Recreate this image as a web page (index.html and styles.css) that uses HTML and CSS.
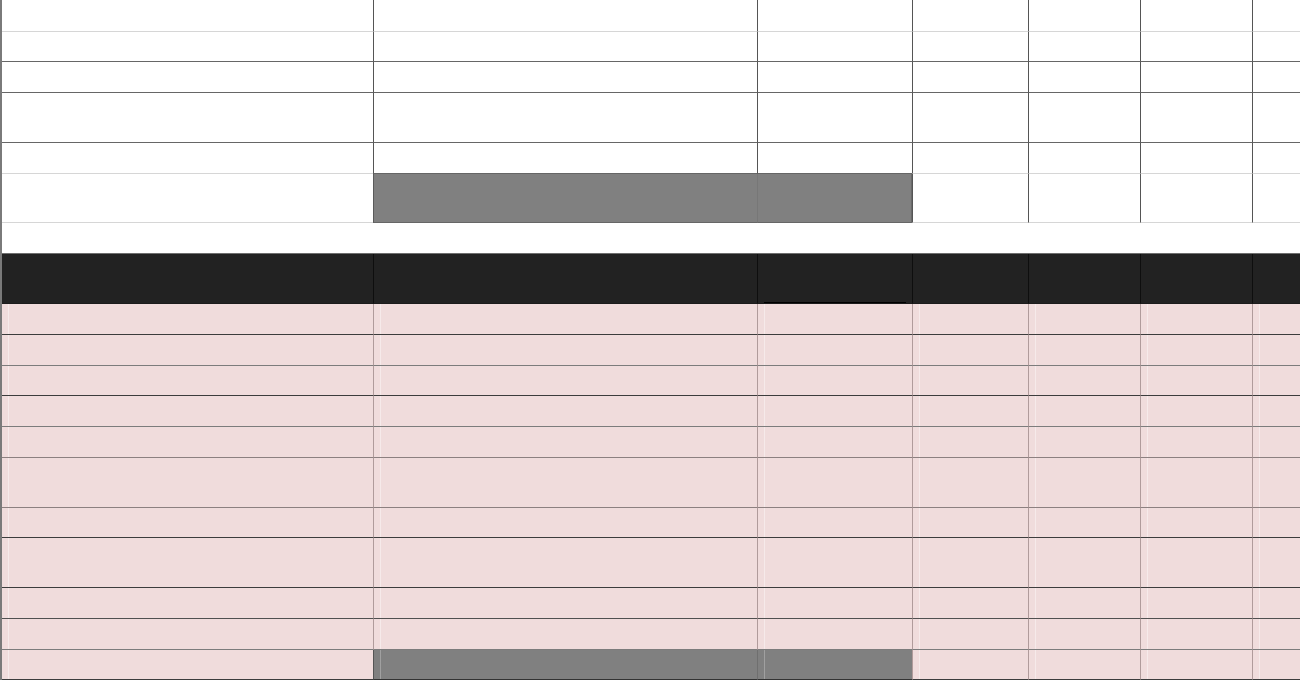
FILE: index.html
```html
<!DOCTYPE html>
<html lang="en">
<head>
<meta charset="utf-8">
<title>Sheet</title>
<link rel="stylesheet" href="styles.css">
</head>
<body>
<div class="sheet">
  <div class="block plain">
    <div class="row h32 light"><div class="c"></div><div class="c"></div><div class="c"></div><div class="c"></div><div class="c"></div><div class="c"></div><div class="c"></div></div>
    <div class="row h30 dark"><div class="c"></div><div class="c"></div><div class="c"></div><div class="c"></div><div class="c"></div><div class="c"></div><div class="c"></div></div>
    <div class="row h31 dark"><div class="c"></div><div class="c"></div><div class="c"></div><div class="c"></div><div class="c"></div><div class="c"></div><div class="c"></div></div>
    <div class="row h50 dark"><div class="c"></div><div class="c"></div><div class="c"></div><div class="c"></div><div class="c"></div><div class="c"></div><div class="c"></div></div>
    <div class="row h31 light"><div class="c"></div><div class="c above"></div><div class="c above"></div><div class="c"></div><div class="c"></div><div class="c"></div><div class="c"></div></div>
    <div class="row h49 light"><div class="c"></div><div class="c hl"></div><div class="c hl hl2"></div><div class="c"></div><div class="c"></div><div class="c"></div><div class="c"></div></div>
  </div>
  <div class="spacer"></div>
  <div class="block pink">
    <div class="row head"><div class="c"></div><div class="c"></div><div class="c sorted"></div><div class="c"></div><div class="c"></div><div class="c"></div><div class="c"></div></div>
    <div class="row h31 l-dark"><div class="c"></div><div class="c"></div><div class="c"></div><div class="c"></div><div class="c"></div><div class="c"></div><div class="c"></div></div>
    <div class="row h31 l-mid"><div class="c"></div><div class="c"></div><div class="c"></div><div class="c"></div><div class="c"></div><div class="c"></div><div class="c"></div></div>
    <div class="row h30 l-dark"><div class="c"></div><div class="c"></div><div class="c"></div><div class="c"></div><div class="c"></div><div class="c"></div><div class="c"></div></div>
    <div class="row h31 l-mid"><div class="c"></div><div class="c"></div><div class="c"></div><div class="c"></div><div class="c"></div><div class="c"></div><div class="c"></div></div>
    <div class="row h31 l-soft"><div class="c"></div><div class="c"></div><div class="c"></div><div class="c"></div><div class="c"></div><div class="c"></div><div class="c"></div></div>
    <div class="row h50 l-soft"><div class="c"></div><div class="c"></div><div class="c"></div><div class="c"></div><div class="c"></div><div class="c"></div><div class="c"></div></div>
    <div class="row h30 l-dark"><div class="c"></div><div class="c"></div><div class="c"></div><div class="c"></div><div class="c"></div><div class="c"></div><div class="c"></div></div>
    <div class="row h50 l-dark"><div class="c"></div><div class="c"></div><div class="c"></div><div class="c"></div><div class="c"></div><div class="c"></div><div class="c"></div></div>
    <div class="row h31 l-dark2"><div class="c"></div><div class="c"></div><div class="c"></div><div class="c"></div><div class="c"></div><div class="c"></div><div class="c"></div></div>
    <div class="row h31 l-mid"><div class="c"></div><div class="c"></div><div class="c"></div><div class="c"></div><div class="c"></div><div class="c"></div><div class="c"></div></div>
    <div class="row h30 l-dark"><div class="c"></div><div class="c hl"></div><div class="c hl hl2"></div><div class="c"></div><div class="c"></div><div class="c"></div><div class="c"></div></div>
  </div>
</div>
</body>
</html>
```

FILE: styles.css
```css
html, body {
  margin: 0;
  padding: 0;
  background: #ffffff;
  font-family: "Liberation Sans", Arial, sans-serif;
  overflow: hidden;
}

.sheet {
  width: 1298px;
  height: 680px;
  border-left: 2px solid #7a7a7a;
  display: flex;
  flex-direction: column;
}

.row {
  display: grid;
  grid-template-columns: 371px 384px 155px 116px 112px 112px 1fr;
  box-sizing: border-box;
  --line: #666;
  --vline: #555;
}

.c {
  box-sizing: border-box;
  border-bottom: 1px solid var(--line);
}

.c + .c {
  border-left: 1px solid var(--vline);
}

.h30 { height: 30px; }
.h31 { height: 31px; }
.h32 { height: 32px; }
.h49 { height: 49px; }
.h50 { height: 50px; }

/* top (white) block */
.plain .light { --line: #d6d6d6; }
.plain .dark { --line: #666666; }

.plain .c.above { border-bottom-color: #666666; }

.c.hl {
  background: #808080;
  border-bottom-color: #666666;
  border-left-color: #5a5a5a;
}

.c.hl2 {
  border-left-color: #777777;
}

.plain .row:last-child .c.hl2 {
  border-right: 1px solid #6a6a6a;
}

.spacer {
  height: 30px;
  flex: none;
}

/* pink block */
.pink .row {
  --vline: rgba(40, 20, 20, 0.32);
}

.pink .c {
  background-color: #f0dcdc;
  background-image: linear-gradient(to right, transparent 6px, rgba(255, 255, 255, 0.4) 6px, rgba(255, 255, 255, 0.4) 7px, transparent 7px);
}

.pink .row.head {
  height: 51px;
  border-top: 1px solid #6e6e6e;
  --vline: #0e0e0e;
  --line: #1c1c1c;
}

.pink .row.head .c {
  background: #222222;
  position: relative;
}

.pink .row.head .c.sorted::after {
  content: "";
  position: absolute;
  left: 6px;
  right: 6px;
  bottom: 0;
  height: 1px;
  background: #000000;
}

.pink .l-dark { --line: #3c3c3c; }
.pink .l-dark2 { --line: #505050; }
.pink .l-mid { --line: #7c7c7c; }
.pink .l-soft { --line: #8c8080; }

.pink .c.hl {
  background-color: #808080;
  background-image: linear-gradient(to right, transparent 6px, rgba(255, 255, 255, 0.25) 6px, rgba(255, 255, 255, 0.25) 7px, transparent 7px);
  border-left-color: #555555;
  border-bottom-color: #333333;
}

.pink .c.hl2 {
  border-left-color: #6f6f6f;
}
```
